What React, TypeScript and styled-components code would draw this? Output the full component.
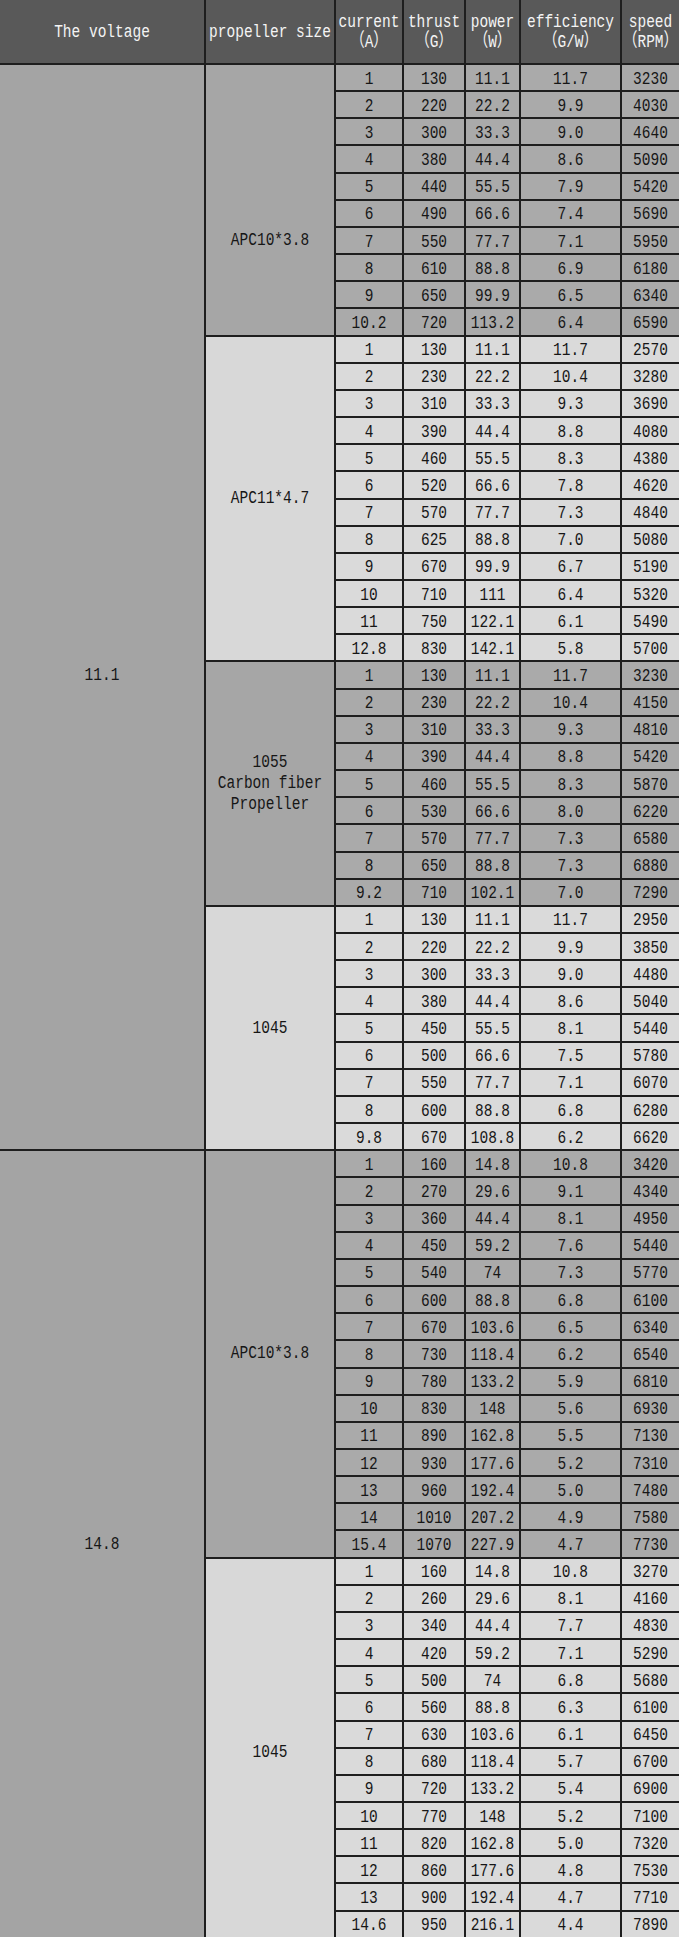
import React from 'react';
import styled, { createGlobalStyle } from 'styled-components';

const GlobalStyle = createGlobalStyle`
  html, body {
    margin: 0;
    padding: 0;
    background: #ffffff;
  }
  body {
    font-family: "Liberation Mono", "Noto Sans CJK SC", monospace;
  }
`;

const Sheet = styled.div`
  display: grid;
  width: 679px;
  grid-template-columns: 204px 128px 66px 60px 53px 99px 57px;
  grid-template-rows: 63px;
  grid-auto-rows: 25.16px;
  gap: 2px;
  background-color: #1e1e1e;
  font-family: "Liberation Mono", "Noto Sans CJK SC", monospace;
  font-size: 14.5px;
  color: #161616;
`;

const HeadCell = styled.div`
  background-color: #595959;
  color: #f4f4f4;
  display: flex;
  flex-direction: column;
  align-items: center;
  justify-content: center;
  text-align: center;
  line-height: 20px;
  white-space: nowrap;
  overflow: hidden;
`;

const VoltageCell = styled.div<{ $span: number; $lift: number }>`
  grid-column: 1;
  grid-row: span ${({ $span }) => $span};
  background-color: #a4a4a4;
  display: flex;
  align-items: center;
  justify-content: center;
  padding-top: ${({ $lift }) => $lift}px;
`;

const PropCell = styled.div<{ $span: number; $light: boolean; $lift: number }>`
  grid-column: 2;
  grid-row: span ${({ $span }) => $span};
  background-color: ${({ $light }) => ($light ? '#d8d8d8' : '#a6a6a6')};
  display: flex;
  flex-direction: column;
  align-items: center;
  justify-content: center;
  text-align: center;
  line-height: 21px;
  padding-top: ${({ $lift }) => $lift}px;
`;

const DataCell = styled.div<{ $light: boolean }>`
  background-color: ${({ $light }) => ($light ? '#dadada' : '#aaaaaa')};
  display: flex;
  align-items: center;
  justify-content: center;
  padding-top: 2px;
  white-space: nowrap;
`;

const Tall = styled.span`
  display: inline-block;
  transform: scaleY(1.3);
`;

type Row = [string, string, string, string, string];

interface Group {
  voltage?: { label: string; span: number; lift: number };
  prop: string[];
  light: boolean;
  lift: number;
  rows: Row[];
}

const groups: Group[] = [
  {
    voltage: { label: '11.1', span: 40, lift: 136 },
    prop: ['APC10*3.8'],
    light: false,
    lift: 82,
    rows: [
      ['1', '130', '11.1', '11.7', '3230'],
      ['2', '220', '22.2', '9.9', '4030'],
      ['3', '300', '33.3', '9.0', '4640'],
      ['4', '380', '44.4', '8.6', '5090'],
      ['5', '440', '55.5', '7.9', '5420'],
      ['6', '490', '66.6', '7.4', '5690'],
      ['7', '550', '77.7', '7.1', '5950'],
      ['8', '610', '88.8', '6.9', '6180'],
      ['9', '650', '99.9', '6.5', '6340'],
      ['10.2', '720', '113.2', '6.4', '6590'],
    ],
  },
  {
    prop: ['APC11*4.7'],
    light: true,
    lift: 0,
    rows: [
      ['1', '130', '11.1', '11.7', '2570'],
      ['2', '230', '22.2', '10.4', '3280'],
      ['3', '310', '33.3', '9.3', '3690'],
      ['4', '390', '44.4', '8.8', '4080'],
      ['5', '460', '55.5', '8.3', '4380'],
      ['6', '520', '66.6', '7.8', '4620'],
      ['7', '570', '77.7', '7.3', '4840'],
      ['8', '625', '88.8', '7.0', '5080'],
      ['9', '670', '99.9', '6.7', '5190'],
      ['10', '710', '111', '6.4', '5320'],
      ['11', '750', '122.1', '6.1', '5490'],
      ['12.8', '830', '142.1', '5.8', '5700'],
    ],
  },
  {
    prop: ['1055', 'Carbon fiber', 'Propeller'],
    light: false,
    lift: 0,
    rows: [
      ['1', '130', '11.1', '11.7', '3230'],
      ['2', '230', '22.2', '10.4', '4150'],
      ['3', '310', '33.3', '9.3', '4810'],
      ['4', '390', '44.4', '8.8', '5420'],
      ['5', '460', '55.5', '8.3', '5870'],
      ['6', '530', '66.6', '8.0', '6220'],
      ['7', '570', '77.7', '7.3', '6580'],
      ['8', '650', '88.8', '7.3', '6880'],
      ['9.2', '710', '102.1', '7.0', '7290'],
    ],
  },
  {
    prop: ['1045'],
    light: true,
    lift: 0,
    rows: [
      ['1', '130', '11.1', '11.7', '2950'],
      ['2', '220', '22.2', '9.9', '3850'],
      ['3', '300', '33.3', '9.0', '4480'],
      ['4', '380', '44.4', '8.6', '5040'],
      ['5', '450', '55.5', '8.1', '5440'],
      ['6', '500', '66.6', '7.5', '5780'],
      ['7', '550', '77.7', '7.1', '6070'],
      ['8', '600', '88.8', '6.8', '6280'],
      ['9.8', '670', '108.8', '6.2', '6620'],
    ],
  },
  {
    voltage: { label: '14.8', span: 29, lift: 0 },
    prop: ['APC10*3.8'],
    light: false,
    lift: 0,
    rows: [
      ['1', '160', '14.8', '10.8', '3420'],
      ['2', '270', '29.6', '9.1', '4340'],
      ['3', '360', '44.4', '8.1', '4950'],
      ['4', '450', '59.2', '7.6', '5440'],
      ['5', '540', '74', '7.3', '5770'],
      ['6', '600', '88.8', '6.8', '6100'],
      ['7', '670', '103.6', '6.5', '6340'],
      ['8', '730', '118.4', '6.2', '6540'],
      ['9', '780', '133.2', '5.9', '6810'],
      ['10', '830', '148', '5.6', '6930'],
      ['11', '890', '162.8', '5.5', '7130'],
      ['12', '930', '177.6', '5.2', '7310'],
      ['13', '960', '192.4', '5.0', '7480'],
      ['14', '1010', '207.2', '4.9', '7580'],
      ['15.4', '1070', '227.9', '4.7', '7730'],
    ],
  },
  {
    prop: ['1045'],
    light: true,
    lift: 10,
    rows: [
      ['1', '160', '14.8', '10.8', '3270'],
      ['2', '260', '29.6', '8.1', '4160'],
      ['3', '340', '44.4', '7.7', '4830'],
      ['4', '420', '59.2', '7.1', '5290'],
      ['5', '500', '74', '6.8', '5680'],
      ['6', '560', '88.8', '6.3', '6100'],
      ['7', '630', '103.6', '6.1', '6450'],
      ['8', '680', '118.4', '5.7', '6700'],
      ['9', '720', '133.2', '5.4', '6900'],
      ['10', '770', '148', '5.2', '7100'],
      ['11', '820', '162.8', '5.0', '7320'],
      ['12', '860', '177.6', '4.8', '7530'],
      ['13', '900', '192.4', '4.7', '7710'],
      ['14.6', '950', '216.1', '4.4', '7890'],
    ],
  },
];

const headers: string[][] = [
  ['The voltage'],
  ['propeller size'],
  ['current', '（A）'],
  ['thrust', '（G）'],
  ['power', '（W）'],
  ['efficiency', '（G/W）'],
  ['speed', '（RPM）'],
];

const App: React.FC = () => {
  return (
    <>
      <GlobalStyle />
      <Sheet>
        {headers.map((lines, i) => (
          <HeadCell key={`h${i}`}>
            {lines.map((line) => (
              <Tall key={line}>{line}</Tall>
            ))}
          </HeadCell>
        ))}
        {groups.map((group, gi) => (
          <React.Fragment key={gi}>
            {group.voltage && (
              <VoltageCell $span={group.voltage.span} $lift={group.voltage.lift}>
                <Tall>{group.voltage.label}</Tall>
              </VoltageCell>
            )}
            <PropCell $span={group.rows.length} $light={group.light} $lift={group.lift}>
              {group.prop.map((line) => (
                <Tall key={line}>{line}</Tall>
              ))}
            </PropCell>
            {group.rows.map((row, ri) =>
              row.map((value, ci) => (
                <DataCell key={`${ri}-${ci}`} $light={group.light}>
                  <Tall>{value}</Tall>
                </DataCell>
              ))
            )}
          </React.Fragment>
        ))}
      </Sheet>
    </>
  );
};

export default App;
